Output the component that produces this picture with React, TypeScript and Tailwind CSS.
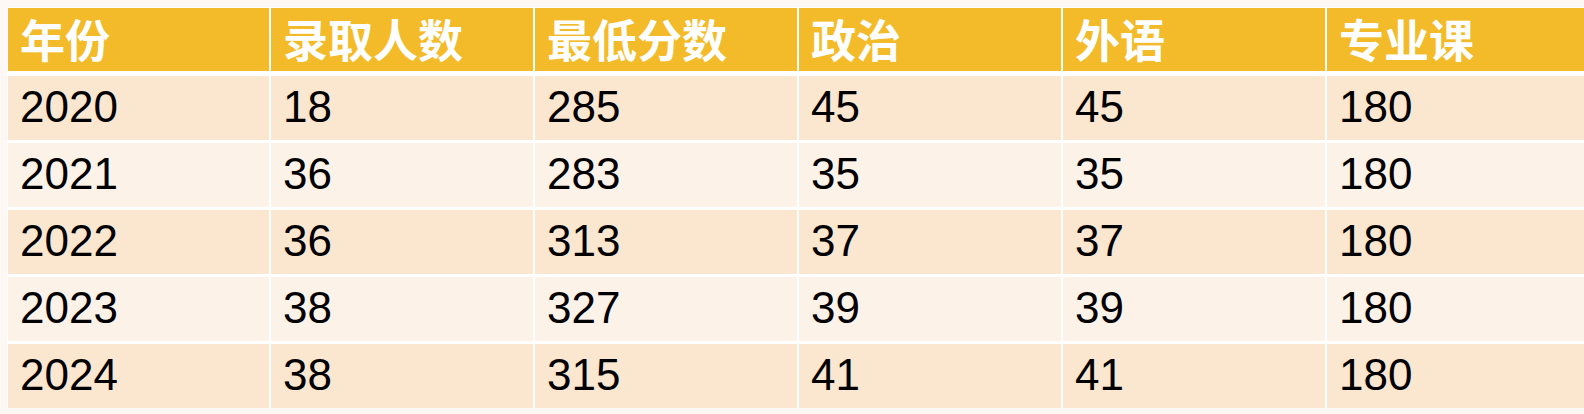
const headers = ["年份", "录取人数", "最低分数", "政治", "外语", "专业课"];

const rows = [
  ["2020", "18", "285", "45", "45", "180"],
  ["2021", "36", "283", "35", "35", "180"],
  ["2022", "36", "313", "37", "37", "180"],
  ["2023", "38", "327", "39", "39", "180"],
  ["2024", "38", "315", "41", "41", "180"],
];

const colWidths = ["w-[261px]", "w-[262px]", "w-[262px]", "w-[262px]", "w-[262px]", "w-[262px]"];

export default function App() {
  return (
    <div className="w-[1584px] h-[414px] overflow-hidden bg-[#fdf8f3] pt-[7px] pl-[7px]">
      <div className="w-max bg-white pt-px pl-px flex flex-col gap-[3px]">
        <div className="flex gap-[2px] mb-[2px]">
          {headers.map((h, i) => (
            <div
              key={h}
              className={`${colWidths[i]} shrink-0 h-[63px] flex items-center pl-[12px] pb-[2px] bg-[#f3bb29] text-white font-bold text-[45px] leading-none font-['Noto_Sans_CJK_SC','Noto_Sans',sans-serif]`}
            >
              {h}
            </div>
          ))}
        </div>
        {rows.map((r, ri) => (
          <div key={r[0]} className="flex gap-[2px]">
            {r.map((c, ci) => (
              <div
                key={ci}
                className={`${colWidths[ci]} shrink-0 h-[64px] flex items-center pl-[12px] pb-[3px] text-black text-[44px] leading-none font-['Liberation_Sans',Arial,sans-serif] ${
                  ri % 2 === 0 ? "bg-[#fbe6cf]" : "bg-[#fdf2e8]"
                }`}
              >
                {c}
              </div>
            ))}
          </div>
        ))}
      </div>
    </div>
  );
}
